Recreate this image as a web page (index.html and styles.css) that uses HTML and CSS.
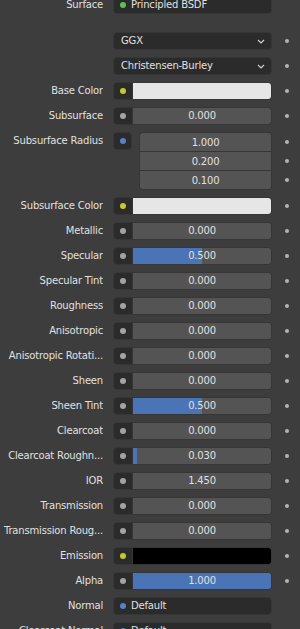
FILE: index.html
```html
<!DOCTYPE html>
<html>
<head>
<meta charset="utf-8">
<link rel="stylesheet" href="styles.css">
</head>
<body>
<div class="panel">
  <div class="row top">
    <span class="label">Surface</span>
    <div class="prop link"><span class="dot green"></span><span class="link-text">Principled BSDF</span></div>
    <span class="deco"></span>
  </div>

  <div class="row gap-big">
    <span class="label"></span>
    <div class="prop select"><span class="sel-text">GGX</span><svg class="chev" width="8" height="5" viewBox="0 0 8 5"><path d="M1 1 L4 4 L7 1" fill="none" stroke="#cfcfcf" stroke-width="1.2"/></svg></div>
    <span class="deco"><i></i></span>
  </div>
  <div class="row">
    <span class="label"></span>
    <div class="prop select"><span class="sel-text">Christensen-Burley</span><svg class="chev" width="8" height="5" viewBox="0 0 8 5"><path d="M1 1 L4 4 L7 1" fill="none" stroke="#cfcfcf" stroke-width="1.2"/></svg></div>
    <span class="deco"><i></i></span>
  </div>

  <div class="row">
    <span class="label">Base Color</span>
    <div class="prop"><span class="sock"><span class="dot yellow"></span></span><span class="swatch white"></span></div>
    <span class="deco"><i></i></span>
  </div>
  <div class="row">
    <span class="label">Subsurface</span>
    <div class="prop"><span class="sock"><span class="dot grey"></span></span><span class="num">0.000</span></div>
    <span class="deco"><i></i></span>
  </div>

  <div class="row vec-row">
    <span class="label">Subsurface Radius</span>
    <div class="vec-wrap">
      <span class="sock solo"><span class="dot blue"></span></span>
      <div class="vec">
        <span class="vnum">1.000</span>
        <span class="vnum">0.200</span>
        <span class="vnum">0.100</span>
      </div>
    </div>
    <span class="deco vdeco"><i></i><i></i><i></i></span>
  </div>

  <div class="row">
    <span class="label">Subsurface Color</span>
    <div class="prop"><span class="sock"><span class="dot yellow"></span></span><span class="swatch white"></span></div>
    <span class="deco"><i></i></span>
  </div>
  <div class="row">
    <span class="label">Metallic</span>
    <div class="prop"><span class="sock"><span class="dot grey"></span></span><span class="num">0.000</span></div>
    <span class="deco"><i></i></span>
  </div>
  <div class="row">
    <span class="label">Specular</span>
    <div class="prop"><span class="sock"><span class="dot grey"></span></span><span class="num"><span class="fill" style="width:50%"></span><span class="val">0.500</span></span></div>
    <span class="deco"><i></i></span>
  </div>
  <div class="row">
    <span class="label">Specular Tint</span>
    <div class="prop"><span class="sock"><span class="dot grey"></span></span><span class="num">0.000</span></div>
    <span class="deco"><i></i></span>
  </div>
  <div class="row">
    <span class="label">Roughness</span>
    <div class="prop"><span class="sock"><span class="dot grey"></span></span><span class="num">0.000</span></div>
    <span class="deco"><i></i></span>
  </div>
  <div class="row">
    <span class="label">Anisotropic</span>
    <div class="prop"><span class="sock"><span class="dot grey"></span></span><span class="num">0.000</span></div>
    <span class="deco"><i></i></span>
  </div>
  <div class="row">
    <span class="label">Anisotropic Rotati...</span>
    <div class="prop"><span class="sock"><span class="dot grey"></span></span><span class="num">0.000</span></div>
    <span class="deco"><i></i></span>
  </div>
  <div class="row">
    <span class="label">Sheen</span>
    <div class="prop"><span class="sock"><span class="dot grey"></span></span><span class="num">0.000</span></div>
    <span class="deco"><i></i></span>
  </div>
  <div class="row">
    <span class="label">Sheen Tint</span>
    <div class="prop"><span class="sock"><span class="dot grey"></span></span><span class="num"><span class="fill" style="width:50%"></span><span class="val">0.500</span></span></div>
    <span class="deco"><i></i></span>
  </div>
  <div class="row">
    <span class="label">Clearcoat</span>
    <div class="prop"><span class="sock"><span class="dot grey"></span></span><span class="num">0.000</span></div>
    <span class="deco"><i></i></span>
  </div>
  <div class="row">
    <span class="label">Clearcoat Roughn...</span>
    <div class="prop"><span class="sock"><span class="dot grey"></span></span><span class="num"><span class="fill" style="width:3%"></span><span class="val">0.030</span></span></div>
    <span class="deco"><i></i></span>
  </div>
  <div class="row">
    <span class="label">IOR</span>
    <div class="prop"><span class="sock"><span class="dot grey"></span></span><span class="num">1.450</span></div>
    <span class="deco"><i></i></span>
  </div>
  <div class="row">
    <span class="label">Transmission</span>
    <div class="prop"><span class="sock"><span class="dot grey"></span></span><span class="num">0.000</span></div>
    <span class="deco"><i></i></span>
  </div>
  <div class="row">
    <span class="label">Transmission Roug...</span>
    <div class="prop"><span class="sock"><span class="dot grey"></span></span><span class="num">0.000</span></div>
    <span class="deco"><i></i></span>
  </div>
  <div class="row">
    <span class="label">Emission</span>
    <div class="prop"><span class="sock"><span class="dot yellow"></span></span><span class="swatch black"></span></div>
    <span class="deco"><i></i></span>
  </div>
  <div class="row">
    <span class="label">Alpha</span>
    <div class="prop"><span class="sock"><span class="dot grey"></span></span><span class="num"><span class="fill full" style="width:100%"></span><span class="val">1.000</span></span></div>
    <span class="deco"><i></i></span>
  </div>
  <div class="row">
    <span class="label">Normal</span>
    <div class="prop link"><span class="dot blue"></span><span class="link-text">Default</span></div>
    <span class="deco"></span>
  </div>
  <div class="row">
    <span class="label">Clearcoat Normal</span>
    <div class="prop link"><span class="dot blue"></span><span class="link-text">Default</span></div>
    <span class="deco"></span>
  </div>
</div>
</body>
</html>
```

FILE: styles.css
```css
html, body {
  margin: 0;
  padding: 0;
  background: #3d3d3d;
  overflow: hidden;
}
body {
  font-family: "DejaVu Sans", sans-serif;
  font-size: 10px;
  letter-spacing: -0.18px;
  color: #e0e0e0;
}
.panel {
  display: flex;
  flex-direction: column;
  margin-top: -4px;
}
.row {
  display: flex;
  align-items: flex-start;
  height: 18px;
  margin-bottom: 7px;
}
.row.top { margin-bottom: 18px; }
.label {
  width: 103px;
  margin-right: 10px;
  text-align: right;
  line-height: 18px;
  white-space: nowrap;
  overflow: hidden;
  flex: none;
}
.prop {
  width: 159px;
  height: 18px;
  box-sizing: border-box;
  border: 1px solid #363636;
  border-radius: 4px;
  display: flex;
  overflow: hidden;
  flex: none;
}
.prop.link, .prop.select {
  background: #2b2b2b;
  align-items: center;
}
.prop.link .dot { margin-left: 6px; }
.link-text { margin-left: 5px; line-height: 16px; }
.prop.select { justify-content: space-between; padding: 0 6px 0 7px; }
.sel-text { line-height: 16px; }
.chev { display: block; }
.sock {
  width: 18px;
  flex: none;
  background: #2b2b2b;
  display: flex;
  align-items: center;
  justify-content: center;
  border-right: 1px solid #363636;
}
.sock.solo {
  height: 18px;
  box-sizing: border-box;
  border: 1px solid #363636;
  border-radius: 4px;
  width: 19px;
}
.dot {
  width: 6px;
  height: 6px;
  border-radius: 50%;
  display: block;
  flex: none;
}
.dot.green { background: #5cc153; }
.dot.yellow { background: #c8c82a; }
.dot.grey { background: #a3a3a3; }
.dot.blue { background: #5b80c6; }
.swatch { flex: 1; }
.swatch.white { background: #e6e6e6; }
.swatch.black { background: #000; }
.num {
  flex: 1;
  position: relative;
  background: #545454;
  text-align: center;
  line-height: 16px;
}
.fill {
  position: absolute;
  left: 0;
  top: 0;
  bottom: 0;
  background: #4a74b6;
}
.val { position: relative; }
.vec-row { height: 58px; }
.vec-wrap {
  width: 159px;
  display: flex;
  gap: 7px;
  flex: none;
}
.vec {
  flex: 1;
  display: flex;
  flex-direction: column;
  border: 1px solid #363636;
  border-radius: 4px;
  overflow: hidden;
  height: 58px;
  box-sizing: border-box;
  gap: 1px;
  background: #363636;
}
.vnum {
  flex: 1;
  background: #545454;
  text-align: center;
  display: flex;
  align-items: center;
  justify-content: center;
}
.deco {
  width: 28px;
  flex: none;
  display: flex;
  flex-direction: column;
  align-items: center;
  padding-left: 1px;
  box-sizing: border-box;
}
.deco i {
  display: block;
  width: 4px;
  height: 4px;
  border-radius: 50%;
  background: #b4b4b4;
  margin-top: 7px;
}
.vdeco {
  height: 58px;
  justify-content: space-around;
}
.vdeco i { margin-top: 0; }
```
